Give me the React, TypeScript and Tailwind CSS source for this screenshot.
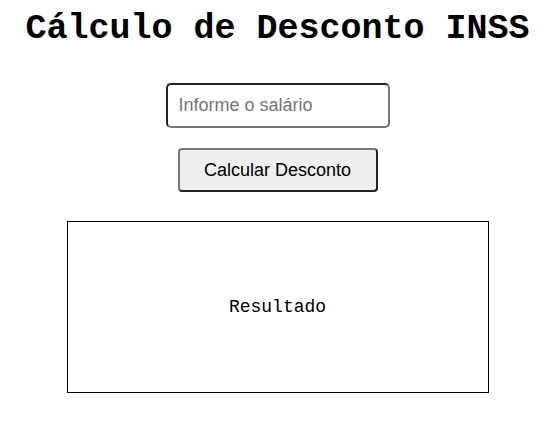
export default function App() {
  return (
    <div className="min-h-[422px] bg-white pr-[5px] flex flex-col items-center">
      <h1 className="mt-[9px] text-[35px] leading-[40px] font-bold text-black whitespace-nowrap font-['Liberation_Mono','Courier_New',monospace]">
        Cálculo de Desconto INSS
      </h1>
      <input
        type="text"
        placeholder="Informe o salário"
        className="mt-[34px] w-[224px] h-[45px] rounded-[5px] border-2 border-t-[#222] border-l-[#222] border-r-[#777] border-b-[#777] px-[11px] text-[18px] text-black placeholder:text-[#757575] font-['Liberation_Sans',Arial,sans-serif] outline-none"
      />
      <button className="mt-[20px] w-[200px] h-[44px] rounded-[4px] border-2 border-t-[#777] border-l-[#777] border-r-[#222] border-b-[#222] bg-[#efefef] text-[18px] text-black font-['Liberation_Sans',Arial,sans-serif]">
        Calcular Desconto
      </button>
      <div className="mt-[29px] w-[422px] h-[172px] border border-black flex items-center justify-center">
        <span className="text-[18px] text-black font-['Liberation_Mono','Courier_New',monospace]">Resultado</span>
      </div>
    </div>
  );
}
